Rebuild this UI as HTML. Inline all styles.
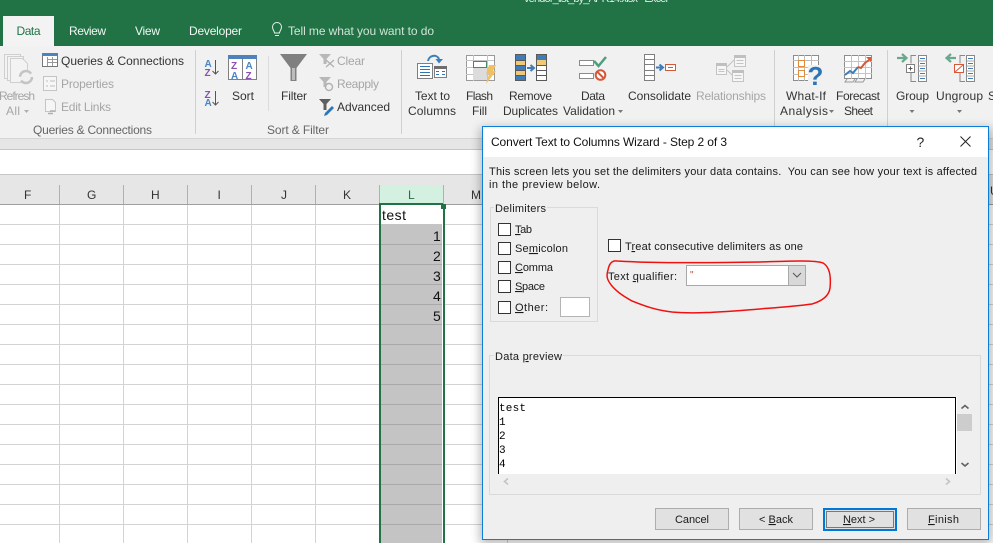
<!DOCTYPE html>
<html><head><meta charset="utf-8">
<style>
html,body{margin:0;padding:0;background:#fff;width:993px;height:543px;overflow:hidden}
svg{display:block;font-family:"Liberation Sans",sans-serif}
text{font-size:12px;fill:#333;white-space:pre}
.d text{fill:#1a1a1a;font-size:11px}
.g{fill:#a6a6a6}
.l{fill:#666}
.u{text-decoration:underline}
</style></head><body>
<svg width="993" height="543" viewBox="0 0 993 543" xmlns="http://www.w3.org/2000/svg">
<defs><filter id="s" x="-5%" y="-5%" width="110%" height="110%"><feGaussianBlur stdDeviation="5"/></filter></defs>
<!-- title band -->
<rect width="993" height="46" fill="#217346"/>
<text x="524" y="2" textLength="144" style="fill:#dfeee6;font-size:11px">vendor_list_by_APR14.xlsx - Excel</text>
<rect x="3" y="16" width="51" height="30" fill="#f3f3f3"/>
<text x="16.500" y="35" textLength="24" style="fill:#217346">Data</text>
<text x="69" y="35" textLength="37" style="fill:#f2f7f4">Review</text>
<text x="135" y="35" textLength="25" style="fill:#f2f7f4">View</text>
<text x="189" y="35" textLength="53" style="fill:#f2f7f4">Developer</text>
<g fill="none" stroke="#e6f0ea" stroke-width="1"><path d="M274.500 33c0-2-2-3-2-6a4.500 4.500 0 0 1 9 0c0 3-2 4-2 6z"/><path d="M275 35.500h4"/></g>
<text x="288" y="35" textLength="146" style="fill:#cfe3d8">Tell me what you want to do</text>

<!-- ribbon -->
<rect y="46" width="993" height="92" fill="#f1f1f1"/>
<rect y="138" width="993" height="1" fill="#d5d5d5"/>
<rect y="139" width="993" height="10" fill="#e6e6e6"/>
<rect y="149" width="993" height="1" fill="#c6c6c6"/>
<rect y="150" width="993" height="24" fill="#fff"/>
<rect y="174" width="993" height="1" fill="#c6c6c6"/>
<rect y="175" width="993" height="29" fill="#e6e6e6"/>
<rect y="204" width="993" height="1" fill="#9f9f9f"/>
<g fill="#d0d0d0">
<rect x="195" y="50" width="1" height="84"/><rect x="401" y="50" width="1" height="84"/><rect x="774" y="50" width="1" height="84"/><rect x="887" y="50" width="1" height="84"/>
<rect x="268" y="56" width="1" height="55" fill="#dcdcdc"/>
</g>

<!-- Refresh All icon -->
<g fill="#f3f3f3" stroke="#cfcfcf"><rect x="4.500" y="54.500" width="16" height="24"/><rect x="7.500" y="56.500" width="16" height="24"/><path d="M10.500 58.500h12l5 5v19h-17z"/></g>
<circle cx="26" cy="77" r="6" fill="#f1f1f1" stroke="#c4c4c4" stroke-width="2.500" stroke-dasharray="15 4"/>
<text x="-1" y="100" textLength="36" class="g">Refresh</text>
<text x="6" y="115" textLength="14" class="g">All</text><path d="M24 110h5l-2.500 3z" fill="#b0b0b0"/>
<!-- Queries -->
<rect x="42.500" y="53.500" width="15" height="13" fill="#fff" stroke="#777"/><rect x="42" y="53" width="16" height="3" fill="#4f81bd"/><path d="M47 59.500h10M47 62.500h10M47.500 57v9M52.500 57v9" stroke="#999" fill="none"/>
<text x="61" y="65" textLength="123">Queries &amp; Connections</text>
<rect x="43.500" y="76.500" width="13" height="14" fill="#f6f6f6" stroke="#c4c4c4"/><path d="M46 81h2M50 81h5M46 86h2M50 86h5" stroke="#bdbdbd"/>
<text x="61" y="88" textLength="53" class="g">Properties</text>
<path d="M45.500 99.500h7l3 3v9h-10z" fill="#f6f6f6" stroke="#c4c4c4"/><path d="M48 113.500h5M50 111h5" stroke="#b0b0b0" stroke-width="1.500"/>
<text x="61" y="111" textLength="50" class="g">Edit Links</text>
<text x="33" y="134" textLength="119" class="l">Queries &amp; Connections</text>
<!-- Sort -->
<g style="font-weight:bold">
<text x="204.500" y="67" style="font-size:10px;fill:#4a84c4">A</text><text x="204.500" y="76" style="font-size:10px;fill:#8a4fb0">Z</text>
<text x="204.500" y="98" style="font-size:10px;fill:#8a4fb0">Z</text><text x="204.500" y="106" style="font-size:10px;fill:#4a84c4">A</text>
</g>
<path d="M215.500 60v14M212.500 71l3 3 3-3M215.500 91v14M212.500 102l3 3 3-3" fill="none" stroke="#555"/>
<rect x="228.500" y="55.500" width="28" height="24" fill="#fff" stroke="#808080"/><rect x="228" y="55" width="29" height="4" fill="#4f81bd"/><rect x="242" y="59" width="1" height="20" fill="#808080"/>
<g style="font-weight:bold">
<text x="231" y="69" style="font-size:10px;fill:#8a4fb0">Z</text><text x="245.500" y="69" style="font-size:10px;fill:#4a84c4">A</text>
<text x="231" y="79" style="font-size:10px;fill:#4a84c4">A</text><text x="245.500" y="79" style="font-size:10px;fill:#8a4fb0">Z</text>
</g>
<text x="232" y="100" textLength="22">Sort</text>
<!-- Filter -->
<path d="M280 54h27l-10.500 14v13h-6V68z" fill="#808080"/><path d="M292 68h3v12h-3z" fill="#bdbdbd"/>
<text x="281" y="100" textLength="26">Filter</text>
<path d="M319 54h12l-4.500 5v5h-3v-5z" fill="#b8b8b8"/><path d="M326 60l8 7M334 60l-8 7" stroke="#b0b0b0" stroke-width="1.300"/>
<text x="337" y="65" textLength="28" class="g">Clear</text>
<path d="M319 77h12l-4.500 5v5h-3v-5z" fill="#b8b8b8"/><circle cx="329" cy="87" r="3.500" fill="none" stroke="#b0b0b0" stroke-width="1.400"/>
<text x="337" y="88" textLength="42" class="g">Reapply</text>
<path d="M319 99h12l-4.500 5v6h-3v-6z" fill="#5e5e5e"/><path d="M325 113l7-7 2 2-7 7-3 1z" fill="#2e75b6"/>
<text x="337" y="111" textLength="53">Advanced</text>
<text x="267" y="134" textLength="62" class="l">Sort &amp; Filter</text>

<!-- Text to Columns -->
<rect x="417.500" y="63.500" width="15" height="15" fill="#fff" stroke="#7f7f7f"/><path d="M420 66.500h10M420 69.500h10M420 72.500h10M420 75.500h10" stroke="#2e75b6"/>
<rect x="434.500" y="66.500" width="12" height="11" fill="#fff" stroke="#7f7f7f"/><rect x="434" y="66" width="13" height="3" fill="#6d6d6d"/><path d="M436 71.500h3M442 71.500h3M436 74.500h3M442 74.500h3" stroke="#2e75b6"/>
<path d="M428 61c1-6 9-7 11-2" fill="none" stroke="#3c7fb8" stroke-width="2"/><path d="M435.500 59h7.500l-4 4.500z" fill="#3c7fb8"/>
<text x="415" y="100" textLength="35">Text to</text><text x="408" y="115" textLength="48">Columns</text>
<!-- Flash Fill -->
<rect x="466.500" y="55.500" width="28" height="25" fill="#fff" stroke="#9a9a9a"/>
<path d="M466 60.500h28M466 67.500h28M466 74.500h28M473.500 55v26M487.500 55v26" stroke="#c4c4c4"/>
<rect x="473" y="68" width="14" height="12" fill="#dcdcdc"/><rect x="473.500" y="61.500" width="13" height="6" fill="#fff" stroke="#3f8f63"/>
<path d="M489 65h7l-3 6h3l-10 13 3-10h-3z" fill="#f2c063"/>
<text x="466" y="100" textLength="27">Flash</text><text x="472" y="115" textLength="15">Fill</text>
<!-- Remove Duplicates -->
<rect x="515" y="54" width="11" height="27" fill="#595959"/>
<rect x="516" y="55" width="9" height="5" fill="#3f7cb8"/><rect x="516" y="61" width="9" height="4" fill="#f0c977"/><rect x="516" y="66" width="9" height="4" fill="#3f7cb8"/><rect x="516" y="71" width="9" height="4" fill="#f0c977"/><rect x="516" y="76" width="9" height="4" fill="#3f7cb8"/>
<rect x="536.500" y="54.500" width="10" height="26" fill="#fff" stroke="#595959"/><rect x="537" y="55" width="9" height="5" fill="#3f7cb8"/><rect x="537" y="60" width="9" height="5" fill="#f0c977"/><path d="M536 65.500h11M536 70.500h11M536 75.500h11" stroke="#595959"/>
<path d="M527 68h6M530.500 65l3.500 3-3.500 3" stroke="#3f7cb8" stroke-width="2" fill="none"/>
<text x="509" y="100" textLength="43">Remove</text><text x="503" y="115" textLength="55">Duplicates</text>
<!-- Data validation -->
<rect x="579.500" y="60.500" width="14" height="5" fill="#fff" stroke="#8a8a8a"/><rect x="579.500" y="73.500" width="14" height="5" fill="#fff" stroke="#8a8a8a"/>
<path d="M594 61l4.500 5 7.500-9" fill="none" stroke="#4f9e7f" stroke-width="2.500"/>
<circle cx="600.500" cy="75" r="4.800" fill="#fff" stroke="#d5583a" stroke-width="2"/><path d="M597 71.500l7 7" stroke="#d5583a" stroke-width="2"/>
<text x="581" y="100" textLength="24">Data</text><text x="563" y="115" textLength="52">Validation</text><path d="M618 110h5l-2.500 3z" fill="#777"/>
<!-- Consolidate -->
<rect x="644.500" y="54.500" width="10" height="26" fill="#fff" stroke="#7f7f7f"/><path d="M644 59.500h11M644 64.500h11M644 70.500h11M644 75.500h11" stroke="#7f7f7f"/>
<path d="M656 67.500h6M659.500 64.500l3.500 3-3.500 3" stroke="#3f7cb8" stroke-width="2" fill="none"/>
<rect x="665.500" y="64.500" width="10" height="6" fill="#fff" stroke="#d5583a"/><path d="M668 67.500h5" stroke="#d5583a"/>
<text x="628" y="100" textLength="63">Consolidate</text>
<!-- Relationships -->
<rect x="716.500" y="63.500" width="10" height="11" fill="#f6f6f6" stroke="#c4c4c4"/><rect x="716" y="63" width="11" height="3" fill="#c0c0c0"/>
<rect x="734.500" y="55.500" width="11" height="11" fill="#f6f6f6" stroke="#c4c4c4"/><rect x="734" y="55" width="12" height="3" fill="#c0c0c0"/>
<rect x="732.500" y="70.500" width="11" height="11" fill="#f6f6f6" stroke="#c4c4c4"/><rect x="732" y="70" width="12" height="3" fill="#c0c0c0"/>
<path d="M727 67l7-7M727 70l5 5M718.500 69.500h6M718.500 71.500h6M736.500 60.500h7M736.500 63.500h7M734.500 75.500h7M734.500 78.500h7" stroke="#c4c4c4" fill="none"/>
<text x="696" y="100" textLength="70" class="g">Relationships</text>
<!-- What-If -->
<rect x="793.500" y="55.500" width="25" height="25" fill="#fff" stroke="#8c8c8c"/>
<path d="M793 60.500h26M793 67.500h26M793 74.500h26M798.500 55v26M804.500 55v26M811.500 55v26" stroke="#bdbdbd"/>
<rect x="798.500" y="60.500" width="6" height="6" fill="#fff" stroke="#e08a3c"/><rect x="798.500" y="70.500" width="6" height="6" fill="#fff" stroke="#e08a3c"/>
<rect x="808" y="65" width="14" height="17" fill="#f1f1f1"/>
<text x="807.500" y="85" style="font-size:26px;font-weight:bold;fill:#2e75b6">?</text>
<text x="786" y="100" textLength="40">What-If</text><text x="780" y="115" textLength="48">Analysis</text><path d="M829 110h5l-2.500 3z" fill="#777"/>
<!-- Forecast -->
<rect x="844.500" y="55.500" width="27" height="23" fill="#fff" stroke="#8c8c8c"/>
<path d="M844 61.500h28M844 67.500h28M844 73.500h28M851.500 55v24M858.500 55v24M865.500 55v24" stroke="#c4c4c4"/>
<path d="M845 75l5-4 3 2 5-6" fill="none" stroke="#3f7cb8" stroke-width="2"/><path d="M858 67l3 1 4-5 4-3" fill="none" stroke="#d5583a" stroke-width="2"/><path d="M866 57h5v5z" fill="#d5583a"/>
<path d="M847 79l-2 3h8l2-3M857 79l-2 3h8l2-3" fill="none" stroke="#999"/>
<text x="836" y="100" textLength="44">Forecast</text><text x="844" y="115" textLength="29">Sheet</text>
<!-- Group -->
<path d="M897 58h9M902 54l4.500 4-4.500 4" stroke="#6aa88d" stroke-width="2.200" fill="none"/>
<path d="M916 55.500h-5v8M911 72v9.500h5" fill="none" stroke="#888"/><rect x="906.500" y="64.500" width="8" height="8" fill="#fff" stroke="#7f7f7f"/><path d="M908.500 68.500h4M910.500 66.500v4" stroke="#555"/>
<rect x="918.500" y="55.500" width="8" height="26" fill="#fff" stroke="#888"/><path d="M920 58.500h5M920 63.500h5M920 68.500h5M920 73.500h5M920 78.500h5" stroke="#3f7cb8"/>
<path d="M918.500 61h8M918.500 66h8M918.500 71h8M918.500 76h8" stroke="#aaa"/>
<text x="896" y="100" textLength="33">Group</text><path d="M909.500 110h5l-2.500 3z" fill="#777"/>
<!-- Ungroup -->
<path d="M956 58h-9M951 54l-4.500 4 4.500 4" stroke="#6aa88d" stroke-width="2.200" fill="none"/>
<path d="M965 55.500h-5v8M960 72v9.500h5" fill="none" stroke="#888"/><rect x="954.500" y="64.500" width="9" height="8" fill="#fff" stroke="#d5583a"/><path d="M955 72l8-7" stroke="#d5583a"/>
<rect x="966.500" y="55.500" width="8" height="26" fill="#fff" stroke="#888"/><path d="M968 58.500h5M968 63.500h5M968 68.500h5M968 73.500h5M968 78.500h5" stroke="#3f7cb8"/>
<path d="M966.500 61h8M966.500 66h8M966.500 71h8M966.500 76h8" stroke="#aaa"/>
<text x="936" y="100" textLength="47">Ungroup</text><path d="M957 110h5l-2.500 3z" fill="#777"/>
<text x="988" y="100">S</text>

<!-- grid -->
<g fill="#d4d4d4">
<rect y="224" width="993" height="1"/><rect y="244" width="993" height="1"/><rect y="264" width="993" height="1"/><rect y="284" width="993" height="1"/><rect y="304" width="993" height="1"/><rect y="324" width="993" height="1"/><rect y="344" width="993" height="1"/><rect y="364" width="993" height="1"/><rect y="384" width="993" height="1"/><rect y="404" width="993" height="1"/><rect y="424" width="993" height="1"/><rect y="444" width="993" height="1"/><rect y="464" width="993" height="1"/><rect y="484" width="993" height="1"/><rect y="504" width="993" height="1"/><rect y="524" width="993" height="1"/>
<rect x="59" y="205" width="1" height="338"/><rect x="123" y="205" width="1" height="338"/><rect x="187" y="205" width="1" height="338"/><rect x="251" y="205" width="1" height="338"/><rect x="315" y="205" width="1" height="338"/><rect x="507" y="205" width="1" height="338"/>
</g>
<g fill="#b0b0b0"><rect x="59" y="185" width="1" height="19"/><rect x="123" y="185" width="1" height="19"/><rect x="187" y="185" width="1" height="19"/><rect x="251" y="185" width="1" height="19"/><rect x="315" y="185" width="1" height="19"/><rect x="379" y="185" width="1" height="19"/><rect x="443" y="185" width="1" height="19"/></g>
<rect x="380" y="185" width="63" height="19" fill="#d3f0e0"/>
<text x="24" y="199">F</text>
<text x="87" y="199">G</text>
<text x="151" y="199">H</text>
<text x="217.500" y="199">I</text>
<text x="281" y="199">J</text>
<text x="343" y="199">K</text>
<text x="408" y="199" style="fill:#217346">L</text>
<text x="471" y="199">M</text>
<text x="990" y="195">U</text>
<!-- selected column -->
<rect x="381" y="205" width="62" height="338" fill="#fff"/>
<rect x="381" y="224" width="61" height="319" fill="#c4c4c4"/>
<g fill="#a9a9a9"><rect x="381" y="244" width="61" height="1"/><rect x="381" y="264" width="61" height="1"/><rect x="381" y="284" width="61" height="1"/><rect x="381" y="304" width="61" height="1"/><rect x="381" y="324" width="61" height="1"/><rect x="381" y="344" width="61" height="1"/><rect x="381" y="364" width="61" height="1"/><rect x="381" y="384" width="61" height="1"/><rect x="381" y="404" width="61" height="1"/><rect x="381" y="424" width="61" height="1"/><rect x="381" y="444" width="61" height="1"/><rect x="381" y="464" width="61" height="1"/><rect x="381" y="484" width="61" height="1"/><rect x="381" y="504" width="61" height="1"/><rect x="381" y="524" width="61" height="1"/></g>
<g fill="#217346"><rect x="379" y="203" width="2" height="340"/><rect x="443" y="209" width="2" height="334"/><rect x="379" y="203" width="64" height="2"/><rect x="441" y="204" width="5" height="5"/></g>
<text x="382" y="220" textLength="24" style="font-size:14px;fill:#111">test</text>
<text x="433" y="241" style="font-size:14px;fill:#111">1</text>
<text x="433" y="261" style="font-size:14px;fill:#111">2</text>
<text x="433" y="281" style="font-size:14px;fill:#111">3</text>
<text x="433" y="301" style="font-size:14px;fill:#111">4</text>
<text x="433" y="321" style="font-size:14px;fill:#111">5</text>

<!-- dialog -->
<rect x="480" y="128" width="512" height="416" fill="#000" opacity=".28" filter="url(#s)"/>
<rect x="482.500" y="126.500" width="506" height="413" fill="#efefef" stroke="#0a7fd9"/>
<rect x="483" y="127" width="505" height="30" fill="#fff"/>
<text x="491" y="146" textLength="236" style="font-size:12px;fill:#111">Convert Text to Columns Wizard - Step 2 of 3</text>
<text x="916.500" y="147" style="font-size:14px;fill:#222">?</text>
<path d="M960.500 136.500l10 10M970.500 136.500l-10 10" stroke="#222" fill="none"/>
<g class="d">
<text x="489" y="175" textLength="488">This screen lets you set the delimiters your data contains.  You can see how your text is affected</text>
<text x="489" y="188" textLength="111">in the preview below.</text>
<rect x="490.500" y="207.500" width="107" height="114" fill="none" stroke="#dadada"/>
<rect x="494" y="203" width="53" height="12" fill="#efefef"/>
<text x="495" y="212" textLength="51">Delimiters</text>
<g fill="#fff" stroke="#333"><rect x="498.500" y="223.500" width="12" height="12"/><rect x="498.500" y="242.500" width="12" height="12"/><rect x="498.500" y="261.500" width="12" height="12"/><rect x="498.500" y="280.500" width="12" height="12"/><rect x="498.500" y="301.500" width="12" height="12"/><rect x="608.500" y="239.500" width="12" height="12"/></g>
<text x="515" y="233" textLength="17"><tspan class="u">T</tspan>ab</text>
<text x="515" y="252" textLength="53">Se<tspan class="u">m</tspan>icolon</text>
<text x="515" y="271" textLength="38"><tspan class="u">C</tspan>omma</text>
<text x="515" y="290" textLength="30"><tspan class="u">S</tspan>pace</text>
<text x="515" y="311" textLength="33"><tspan class="u">O</tspan>ther:</text>
<rect x="560.500" y="297.500" width="29" height="19" fill="#fff" stroke="#b4b4b4"/>
<text x="625" y="250" textLength="178">T<tspan class="u">r</tspan>eat consecutive delimiters as one</text>
<text x="608" y="280" textLength="69">Text <tspan class="u">q</tspan>ualifier:</text>
<rect x="686.500" y="265.500" width="119" height="20" fill="#fff" stroke="#a8a8a8"/>
<rect x="788.500" y="265.500" width="17" height="20" fill="#d8d8d8" stroke="#a8a8a8"/>
<path d="M793 273l4 4 4-4" fill="none" stroke="#555"/>
<text x="690" y="278" style="font-size:10px;fill:#b5502a">"</text>

<rect x="489.500" y="355.500" width="491" height="139" fill="none" stroke="#dadada"/>
<rect x="494" y="351" width="69" height="12" fill="#efefef"/>
<text x="495" y="360" textLength="67">Data <tspan class="u">p</tspan>review</text>
<rect x="498" y="397" width="459" height="77" fill="#fff"/>
<path d="M498.500 474V397.500H955.500V474" fill="none" stroke="#000"/>
<text x="499" y="411" style="font-family:'Liberation Mono',monospace;font-size:11px;fill:#000" textLength="27">test</text>
<text x="499" y="425" style="font-family:'Liberation Mono',monospace;font-size:11px;fill:#000">1</text>
<text x="499" y="439" style="font-family:'Liberation Mono',monospace;font-size:11px;fill:#000">2</text>
<text x="499" y="453" style="font-family:'Liberation Mono',monospace;font-size:11px;fill:#000">3</text>
<text x="499" y="467" style="font-family:'Liberation Mono',monospace;font-size:11px;fill:#000">4</text>
<rect x="957" y="414" width="15" height="17" fill="#cdcdcd"/>
<path d="M961.500 408.500l3.500-3 3.500 3M961.500 463l3.500 3 3.500-3" fill="none" stroke="#606060" stroke-width="1.600"/>
<path d="M508 478.500l-3.500 3 3.500 3M946 478.500l3.500 3-3.500 3" fill="none" stroke="#c4c4c4" stroke-width="1.600"/>

<g fill="#e1e1e1" stroke="#adadad"><rect x="655.500" y="508.500" width="73" height="21"/><rect x="739.500" y="508.500" width="73" height="21"/><rect x="907.500" y="508.500" width="73" height="21"/></g>
<rect x="824" y="509" width="72" height="21" fill="#e1e1e1" stroke="#0078d7" stroke-width="2"/>
<rect x="826.500" y="511.500" width="67" height="16" fill="none" stroke="#111" stroke-dasharray="1 1"/>
<text x="675" y="523" textLength="34">Cancel</text>
<text x="759" y="523" textLength="34">&lt; <tspan class="u">B</tspan>ack</text>
<text x="843" y="523" textLength="32"><tspan class="u">N</tspan>ext &gt;</text>
<text x="928" y="523" textLength="31"><tspan class="u">F</tspan>inish</text>
</g>

<!-- red annotation -->
<path d="M608 270C609 264 612 260 617 261C650 263 700 263 760 262C790 261 815 260 823 263C830 267 831 278 830 288C829 296 822 301 812 304C790 307 770 308 747 310C720 312 695 314 672 312C655 310 645 306 632 301C625 297 618 293 612 286C607 280 606 276 608 270Z" fill="none" stroke="#f01010" stroke-width="1.500"/>
</svg>
</body></html>
